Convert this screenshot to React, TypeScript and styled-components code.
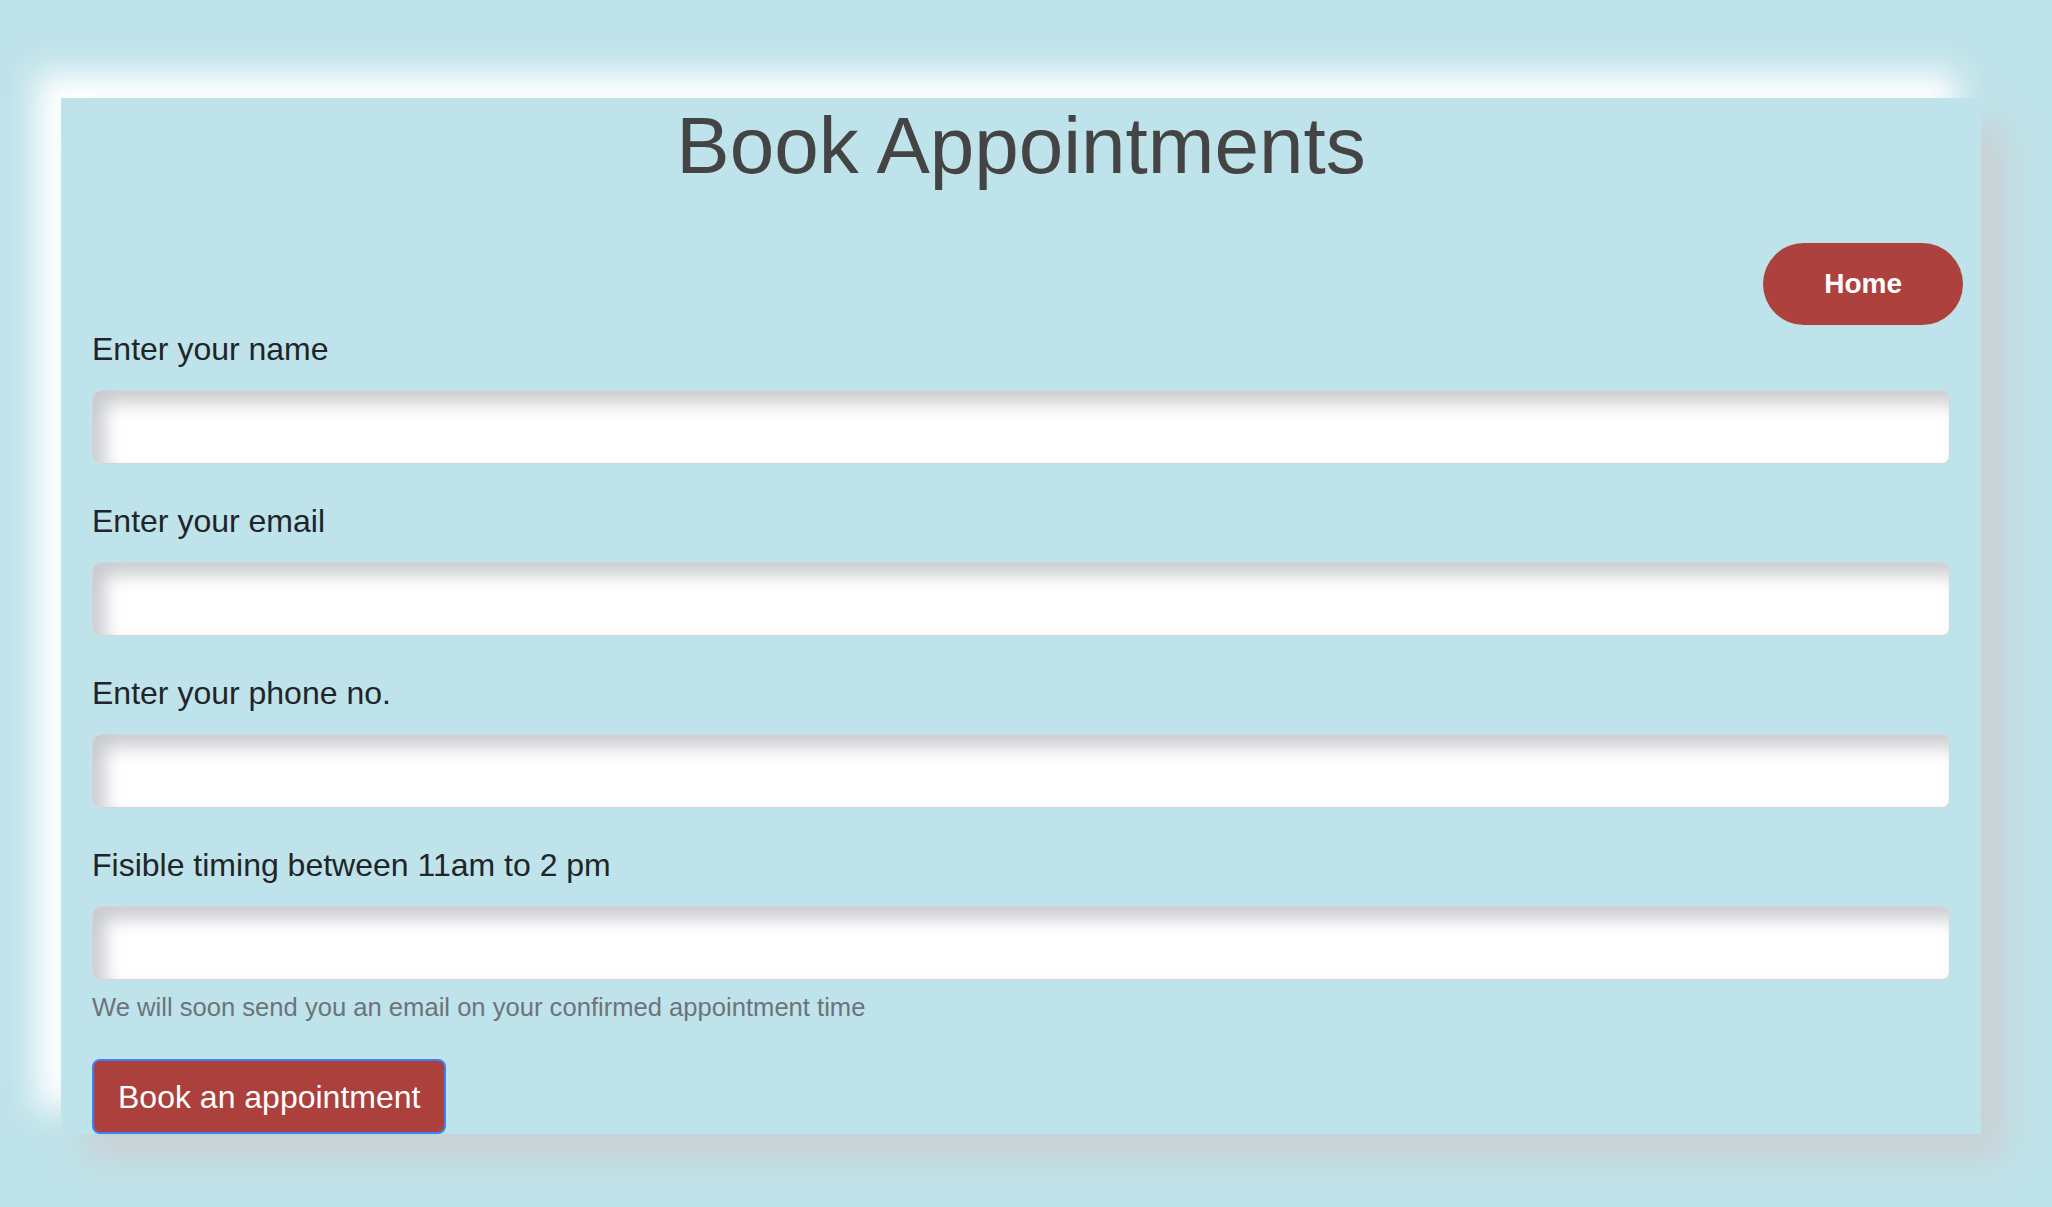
import React from "react";
import styled, { createGlobalStyle } from "styled-components";

const GlobalStyle = createGlobalStyle`
  html, body {
    margin: 0;
    padding: 0;
    background: #bfe3ea;
    font-family: "Liberation Sans", Arial, Helvetica, sans-serif;
  }
  * { box-sizing: border-box; }
`;

const Page = styled.div`
  width: 2052px;
  min-height: 1207px;
  padding: 98px 71px 73px 61px;
  background: #bfe3ea;
`;

const Card = styled.main`
  display: flex;
  flex-direction: column;
  background: #bfe3ea;
  box-shadow: 25px 25px 30px #c9d1d5, -25px -25px 30px #ffffff;
`;

const Title = styled.h1`
  margin: 0;
  font-size: 80px;
  line-height: 96px;
  font-weight: 400;
  color: #444444;
  text-align: center;
`;

const NavRow = styled.nav`
  display: flex;
  justify-content: flex-end;
  margin-top: 49px;
  padding-right: 18px;
`;

const HomeButton = styled.button`
  height: 82px;
  padding: 0 61px;
  border: none;
  border-radius: 41px;
  background: #ad413d;
  color: #ffffff;
  font-family: "Liberation Sans", Arial, sans-serif;
  font-size: 28px;
  font-weight: 700;
  line-height: 32px;
  cursor: pointer;
`;

const Form = styled.form`
  display: flex;
  flex-direction: column;
  padding: 0 31px;
`;

const Field = styled.div<{ $last?: boolean }>`
  display: flex;
  flex-direction: column;
  margin-bottom: ${(p) => (p.$last ? "0" : "33px")};
`;

const Label = styled.label`
  display: block;
  font-size: 32px;
  line-height: 48px;
  color: #212529;
  margin-bottom: 17px;
`;

const Input = styled.input`
  height: 74px;
  width: 100%;
  border: 1px solid #d3d5d8;
  border-radius: 8px;
  background: #ffffff;
  box-shadow: inset 12px 12px 18px #c9cbcf;
  outline: none;
  padding: 0 20px;
  font-size: 28px;
  font-family: "Liberation Sans", Arial, sans-serif;
`;

const Hint = styled.div`
  margin-top: 9px;
  font-size: 25.6px;
  line-height: 36px;
  color: #6c737a;
`;

const SubmitButton = styled.button`
  align-self: flex-start;
  margin-top: 34px;
  height: 75px;
  padding: 0 24px;
  border: 2px solid #3b82f6;
  border-radius: 8px;
  background: #ab403c;
  color: #ffffff;
  font-family: "Liberation Sans", Arial, sans-serif;
  font-size: 32px;
  line-height: 40px;
  cursor: pointer;
`;

const fields = [
  { id: "name", label: "Enter your name", type: "text" },
  { id: "email", label: "Enter your email", type: "email" },
  { id: "phone", label: "Enter your phone no.", type: "tel" },
  { id: "timing", label: "Fisible timing between 11am to 2 pm", type: "text" },
];

export default function App() {
  return (
    <>
      <GlobalStyle />
      <Page>
        <Card>
          <Title>Book Appointments</Title>
          <NavRow>
            <HomeButton type="button">Home</HomeButton>
          </NavRow>
          <Form onSubmit={(e) => e.preventDefault()}>
            {fields.map((f, i) => (
              <Field key={f.id} $last={i === fields.length - 1}>
                <Label htmlFor={f.id}>{f.label}</Label>
                <Input id={f.id} type={f.type} />
              </Field>
            ))}
            <Hint>We will soon send you an email on your confirmed appointment time</Hint>
            <SubmitButton type="submit">Book an appointment</SubmitButton>
          </Form>
        </Card>
      </Page>
    </>
  );
}
